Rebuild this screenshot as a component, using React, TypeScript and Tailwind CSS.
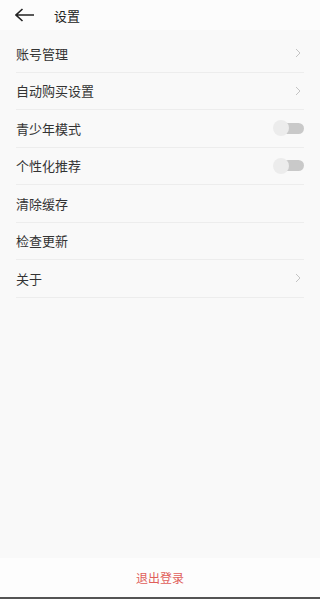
import React from "react";

const items: { label: string; type: "chevron" | "toggle" | "none" }[] = [
  { label: "账号管理", type: "chevron" },
  { label: "自动购买设置", type: "chevron" },
  { label: "青少年模式", type: "toggle" },
  { label: "个性化推荐", type: "toggle" },
  { label: "清除缓存", type: "none" },
  { label: "检查更新", type: "none" },
  { label: "关于", type: "chevron" },
];

function Chevron() {
  return (
    <svg width="6" height="10" viewBox="0 0 6 10" className="mr-[3px]">
      <path d="M1 1 L5 5 L1 9" fill="none" stroke="#c4c4c4" strokeWidth="1" />
    </svg>
  );
}

function Toggle() {
  return (
    <div className="relative w-[31px] h-[17px] flex items-center">
      <div className="absolute right-0 w-[24px] h-[11px] rounded-full bg-[#c9c9c9]" />
      <div className="absolute left-0 w-[16px] h-[16px] rounded-full bg-[#ececec]" />
    </div>
  );
}

export default function App() {
  return (
    <div
      className="w-[320px] h-[599px] flex flex-col bg-[#f9f9f9] text-[#333333]"
      style={{ fontFamily: '"Noto Sans CJK SC", "Noto Sans", sans-serif' }}
    >
      <div className="h-[30px] flex items-center bg-[#fcfcfc] shrink-0">
        <svg width="20" height="14" viewBox="0 0 20 14" className="ml-[15px]">
          <path d="M1 7 H19 M7.5 1 L1 7 L7.5 13" fill="none" stroke="#222" strokeWidth="1.6" />
        </svg>
        <span className="ml-[19px] text-[13px] leading-none text-[#222]">设置</span>
      </div>
      <div className="flex-1 pt-[5px]">
        {items.map((it) => (
          <div key={it.label} className="mx-[16px] h-[37.5px] flex items-center justify-between border-b border-[#ededed]">
            <span className="text-[13px] leading-none">{it.label}</span>
            {it.type === "chevron" && <Chevron />}
            {it.type === "toggle" && <Toggle />}
          </div>
        ))}
      </div>
      <div className="h-[39px] bg-[#fdfdfd] flex items-center justify-center shrink-0">
        <span className="text-[12px] leading-none text-[#e05e5a]">退出登录</span>
      </div>
      <div className="h-[2px] bg-[#555555] shrink-0" />
    </div>
  );
}
